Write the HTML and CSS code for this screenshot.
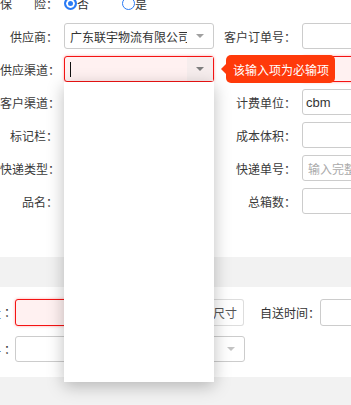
FILE: index.html
```html
<!DOCTYPE html>
<html lang="zh-CN">
<head>
    <meta charset="UTF-8">
    <meta name="viewport" content="width=device-width, initial-scale=1.0">
    <title>订单录入</title>
    <link rel="stylesheet" href="styles.css">
</head>
<body>
    <div class="page">
        <div class="form">
            <div class="row">
                <div class="field">
                    <label class="lbl">保<span class="gap"></span>险</label>
                    <div class="radios">
                        <span class="radio checked"></span><span class="radio-text">否</span>
                        <span class="radio"></span><span class="radio-text">是</span>
                    </div>
                </div>
            </div>

            <div class="row">
                <div class="field">
                    <label class="lbl">供应商</label>
                    <div class="select">
                        <span class="value">广东联宇物流有限公司</span>
                        <span class="arrow"><i class="caret"></i></span>
                    </div>
                </div>
                <div class="field">
                    <label class="lbl lbl-right">客户订单号</label>
                    <div class="input"></div>
                </div>
            </div>

            <div class="row">
                <div class="field">
                    <label class="lbl">供应渠道</label>
                    <div class="select error open">
                        <span class="value"><i class="cursor"></i></span>
                        <span class="arrow"><i class="caret dark"></i></span>
                        <div class="tip">该输入项为必输项</div>
                        <div class="dropdown"></div>
                    </div>
                </div>
                <div class="field">
                    <label class="lbl lbl-right">客户单号</label>
                    <div class="input error"></div>
                </div>
            </div>

            <div class="row">
                <div class="field">
                    <label class="lbl">客户渠道</label>
                    <div class="input"></div>
                </div>
                <div class="field">
                    <label class="lbl lbl-right">计费单位</label>
                    <div class="input"><span class="latin">cbm</span></div>
                </div>
            </div>

            <div class="row">
                <div class="field">
                    <label class="lbl">标记栏</label>
                    <div class="input"></div>
                </div>
                <div class="field">
                    <label class="lbl lbl-right">成本体积</label>
                    <div class="input"></div>
                </div>
            </div>

            <div class="row">
                <div class="field">
                    <label class="lbl">快递类型</label>
                    <div class="input"></div>
                </div>
                <div class="field">
                    <label class="lbl lbl-right">快递单号</label>
                    <div class="input"><span class="placeholder">输入完整单号</span></div>
                </div>
            </div>

            <div class="row">
                <div class="field">
                    <label class="lbl">品名</label>
                    <div class="input"></div>
                </div>
                <div class="field">
                    <label class="lbl lbl-right">总箱数</label>
                    <div class="input"></div>
                </div>
            </div>
        </div>

        <div class="band"></div>

        <div class="section">
            <div class="row tall">
                <label class="lbl-narrow">货物重量</label>
                <div class="input error wide"></div>
                <div class="btn">尺寸</div>
                <label class="lbl-time">自送时间</label>
                <div class="input time"></div>
            </div>
            <div class="row">
                <label class="lbl-narrow">包装材料</label>
                <div class="select long">
                    <span class="value"></span>
                    <span class="arrow"><i class="caret light"></i></span>
                </div>
            </div>
        </div>

        <div class="band bottom"></div>
    </div>
</body>
</html>
```

FILE: styles.css
```css
/* Global */
body {
    margin: 0;
    background-color: #FFFFFF;
    font-family: "Noto Sans CJK SC", sans-serif;
    font-size: 12px;
    color: #333333;
    overflow: hidden;
}

.page {
    margin-top: -10px;
    width: 351px;
}

/* Form rows */
.form {
    padding-bottom: 36px;
}

.row {
    display: flex;
    align-items: center;
    height: 26px;
    margin-bottom: 7px;
}

.field {
    display: flex;
    align-items: center;
    height: 100%;
}

/* centred colon, as the original font draws it */
.lbl::after,
.lbl-narrow::after,
.lbl-time::after {
    content: "：";
    font-family: "Noto Sans CJK TC", sans-serif;
}

.lbl {
    width: 58px;
    margin-right: 6px;
    text-align: right;
    white-space: nowrap;
    flex-shrink: 0;
    color: #3A3A3A;
}

.lbl .gap {
    display: inline-block;
    width: 22px;
}

.lbl-right {
    width: 82px;
}

/* Radios */
.radios {
    display: flex;
    align-items: center;
}

.radio {
    box-sizing: border-box;
    width: 13px;
    height: 13px;
    border: 1px solid #2A7BF5;
    border-radius: 50%;
    background-color: #FFFFFF;
}

.radio.checked {
    border: 2px solid #2A7BF5;
    box-shadow: inset 0 0 0 2px #FFFFFF;
    background-color: #2A7BF5;
}

.radio-text {
    width: 45px;
}

/* Inputs */
.input,
.select {
    box-sizing: border-box;
    position: relative;
    display: flex;
    align-items: center;
    width: 150px;
    height: 26px;
    border: 1px solid #CCCCCC;
    border-radius: 3px;
    background-color: #FFFFFF;
    flex-shrink: 0;
}

.input {
    padding: 0 5px;
}

.input.error,
.select.error {
    border-color: #F41414;
    background-color: #FFF1F1;
    box-shadow: 0 0 3px rgba(255, 0, 0, 0.35);
}

.select .value {
    flex: 1;
    overflow: hidden;
    white-space: nowrap;
    padding-left: 5px;
    height: 100%;
    display: flex;
    align-items: center;
}

.select .arrow {
    width: 26px;
    height: 100%;
    display: flex;
    align-items: center;
    justify-content: center;
}

.select.error .arrow {
    background-color: #F6EDED;
}

.caret {
    width: 0;
    height: 0;
    border-left: 4px solid transparent;
    border-right: 4px solid transparent;
    border-top: 4px solid #A0A0A0;
}

.caret.dark {
    border-top-color: #7E7E7E;
}

.caret.light {
    border-top-color: #C4C4C4;
}

.cursor {
    display: block;
    width: 1px;
    height: 15px;
    background-color: #111111;
}

.latin {
    font-family: "Liberation Sans", Arial, sans-serif;
    font-size: 13px;
    color: #333333;
    margin-left: -2px;
}

.placeholder {
    color: #AAAAAA;
    white-space: nowrap;
    overflow: hidden;
}

/* Validation tooltip */
.tip {
    position: absolute;
    left: 161px;
    top: -2px;
    z-index: 3;
    height: 28px;
    padding: 0 6px 0 7px;
    display: flex;
    align-items: center;
    border-radius: 5px;
    background-color: #FF3A0A;
    color: #FFFFFF;
    white-space: nowrap;
}

.tip::before {
    content: "";
    position: absolute;
    left: -5px;
    top: 9px;
    border-top: 5px solid transparent;
    border-bottom: 5px solid transparent;
    border-right: 5px solid #FF3A0A;
}

/* Open dropdown */
.dropdown {
    position: absolute;
    left: -1px;
    top: 25px;
    z-index: 2;
    width: 150px;
    height: 300px;
    background-color: #FFFFFF;
    box-shadow: 0 4px 16px rgba(0, 0, 0, 0.26);
}

/* Grey bands */
.band {
    height: 30px;
    background-color: #F2F2F2;
}

.band.bottom {
    height: 40px;
}

/* Lower section */
.section {
    padding: 12px 0 15px;
}

.section .row {
    margin-bottom: 10px;
}

.section .row:last-child {
    margin-bottom: 0;
}

.section .row.tall {
    height: 27px;
}

.lbl-narrow {
    width: 13px;
    margin-right: 2px;
    display: flex;
    justify-content: flex-end;
    white-space: nowrap;
    flex-shrink: 0;
}

.input.wide {
    width: 192px;
    height: 27px;
    border-radius: 3px 0 0 3px;
}

.btn {
    box-sizing: border-box;
    height: 27px;
    padding: 0 6px;
    display: flex;
    align-items: center;
    border: 1px solid #DDDDDD;
    border-left: none;
    border-radius: 0 3px 3px 0;
    background-color: #FFFFFF;
    color: #555555;
    flex-shrink: 0;
}

.lbl-time {
    margin-left: 16px;
    white-space: nowrap;
    flex-shrink: 0;
}

.input.time {
    height: 27px;
}

.select.long {
    width: 230px;
}
```
